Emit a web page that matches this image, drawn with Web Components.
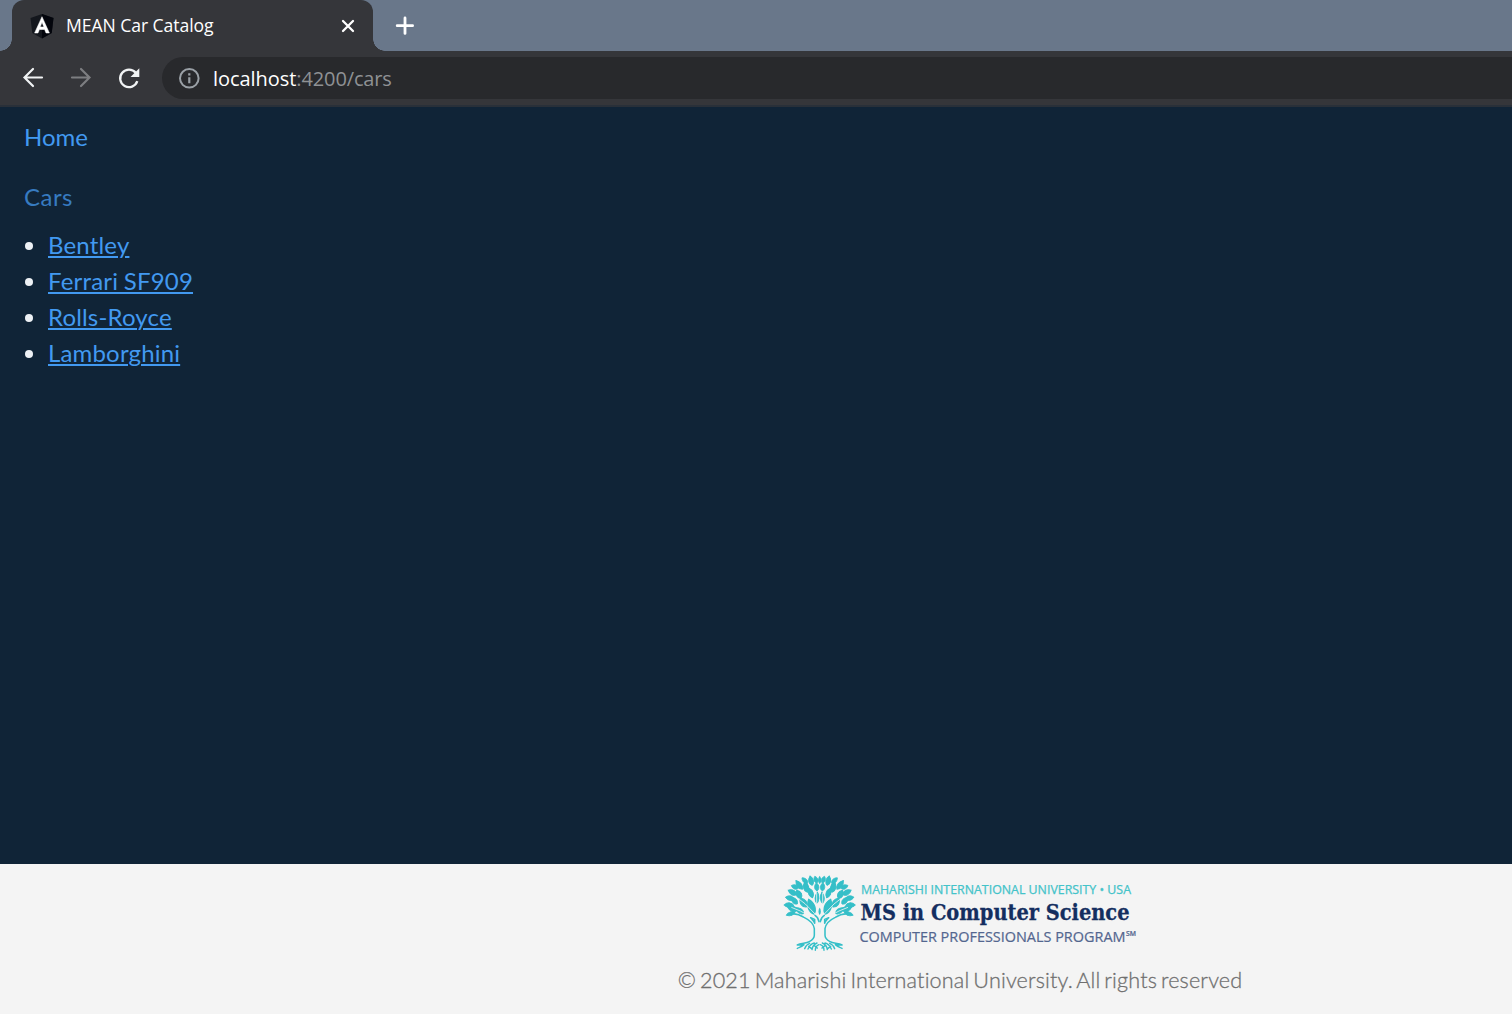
<!DOCTYPE html>
<html lang="en">
<head>
<meta charset="utf-8">
<title>MEAN Car Catalog</title>
<style>
html, body { margin: 0; height: 100%; overflow: hidden; background: #102437; }
body { font: 24px/36px Lato, "Liberation Sans", sans-serif; }
</style>
</head>
<body>
<car-app></car-app>
<script>
const define = (name, html) => {
  const template = document.createElement('template');
  template.innerHTML = html;
  customElements.define(name, class extends HTMLElement {
    constructor() {
      super();
      this.attachShadow({ mode: 'open' }).append(template.content.cloneNode(true));
    }
  });
};

define('browser-tabs', `
<style>
:host { display: flex; height: 51px; background: #69778a; box-sizing: border-box; padding-left: 12px; font: 17.6px/24px "Open Sans", "Noto Sans", sans-serif; }
.tab { position: relative; width: 361px; height: 51px; box-sizing: border-box; padding: 0 17px 0 18px; display: flex; align-items: center; background: #35363a; border-radius: 12px 12px 0 0; color: #fff; }
.tab::before, .tab::after { content: ""; position: absolute; bottom: 0; width: 12px; height: 12px; }
.tab::before { right: 100%; background: radial-gradient(circle at 0 0, transparent 11.5px, #35363a 12px); }
.tab::after { left: 100%; background: radial-gradient(circle at 100% 0, transparent 11.5px, #35363a 12px); }
.title { margin-left: 12px; flex: 1; white-space: nowrap; letter-spacing: -.07px; padding-bottom: 1px; }
svg { display: block; flex: none; }
.plus { margin: 16px 0 0 22px; }
</style>
<div class="tab">
  <svg width="24" height="26" viewBox="0 0 24 26"><path d="M12 1 23.5 5 21.7 20 12 25.5 2.3 20 .5 5Z" fill="#14171d"/><path d="M12 1 23.5 5 21.7 20 12 25.5Z" fill="#03050c"/><path d="M12 3.7 4.6 20h3.4l1.4-3.5h5.2L16 20h3.4ZM12 9.3l1.8 4.6h-3.6Z" fill="#fff" stroke="#fff" stroke-width=".5" fill-rule="evenodd"/></svg>
  <span class="title"><slot></slot></span>
  <svg width="16" height="16" viewBox="0 0 16 16"><path d="M3 3l10 10m0-10L3 13" stroke="#fff" stroke-width="2.3" stroke-linecap="round"/></svg>
</div>
<svg class="plus" width="20" height="20" viewBox="0 0 20 20"><path d="M10 2v15.4M2.2 9.7h15.4" stroke="#fff" stroke-width="2.8" stroke-linecap="round"/></svg>`);

define('browser-toolbar', `
<style>
:host { display: flex; align-items: center; height: 56px; box-sizing: border-box; padding: 0 0 0 21px; background: #35363a; border-bottom: 2px solid #293039; }
svg { display: block; flex: none; }
.nav { margin-right: 24px; }
.nav:nth-of-type(3) { margin-right: 21px; }
.address { flex: 1; height: 42px; border-radius: 21px 0 0 21px; background: #28292c; display: flex; align-items: center; padding-left: 16px; font: 20px/28px "Open Sans", "Noto Sans", sans-serif; color: #8f9194; }
.url { margin-left: 13px; padding-top: 2px; white-space: nowrap; letter-spacing: -.13px; }
b { font-weight: 400; color: #fff; letter-spacing: -.05px; }
</style>
<svg class="nav" width="24" height="24" viewBox="0 0 24 24" fill="none" stroke="#f1f3f4" stroke-width="2.2" stroke-linecap="round"><path d="M21 11.5H3.5M12 3 3.5 11.5l8.5 8.5"/></svg>
<svg class="nav" width="24" height="24" viewBox="0 0 24 24" fill="none" stroke="#7d7e81" stroke-width="2.2" stroke-linecap="round"><path d="M3 11.5h17.5M12 3l8.5 8.5L12 20"/></svg>
<svg class="nav" width="24" height="24" viewBox="0 -.5 24 24"><path d="M20.3 14.7A8.8 8.8 0 1 1 18.8 6.3" fill="none" stroke="#f1f3f4" stroke-width="2.3"/><path d="M22.3 1.8v8.8h-8.8Z" fill="#f1f3f4"/></svg>
<div class="address">
  <svg width="22" height="22" viewBox="0 0 22 22" fill="none" stroke="#9aa0a6" stroke-width="2"><circle cx="11.3" cy="11.3" r="9.3"/><path d="M11.3 10.2v6M11.3 6.2v2.2" stroke-width="2.2"/></svg>
  <span class="url"><b>localhost</b>:4200/cars</span>
</div>`);

define('car-link', `
<style>
:host { display: list-item; list-style: disc; color: #edf1f5; margin-left: 48px; }
a { color: #4299f0; letter-spacing: .17px; word-spacing: -.6px; text-decoration: underline; text-decoration-thickness: 2px; text-underline-offset: 2px; }
</style>
<a href="#"><slot></slot></a>`);

define('car-catalog', `
<style>
:host { display: block; flex: 1; min-height: 0; background: #102437; padding-top: 12px; }
.home, h1 { display: block; margin-left: 24px; text-decoration: none; }
.home { color: #4299f0; }
h1 { font: inherit; letter-spacing: .5px; color: #377bc0; margin-top: 24px; margin-bottom: 12px; }
</style>
<a class="home" href="#">Home</a>
<h1>Cars</h1>
<slot></slot>`);

define('university-logo', `
<style>
:host { display: block; width: 360px; height: 84px; }
svg { display: block; overflow: visible; }
</style>
<svg width="360" height="84" viewBox="0 0 360 84">
  <defs>
    <path id="leaf" d="M0 0C-9-5-10-16 0-25 10-16 9-5 0 0Z"/>
    <g id="half">
      <g fill="#35bfc8" stroke="#35bfc8" stroke-width="2.6">
        <use href="#leaf" transform="translate(67 166) rotate(-72) scale(1.1 1.2)"/>
        <use href="#leaf" transform="translate(60 172) rotate(-108) scale(.8 1.1)"/>
        <use href="#leaf" transform="translate(56 151) rotate(-88) scale(1 1.15)"/>
        <use href="#leaf" transform="translate(67 147) rotate(-42) scale(1 1.05)"/>
        <use href="#leaf" transform="translate(57 132) rotate(-78) scale(.95 1.05)"/>
        <use href="#leaf" transform="translate(65 119) rotate(-62) scale(1 1.15)"/>
        <use href="#leaf" transform="translate(78 130) rotate(-28) scale(1.1 1.1)"/>
        <use href="#leaf" transform="translate(70 100) rotate(-68) scale(.9 .9)"/>
        <use href="#leaf" transform="translate(82 103) rotate(-36) scale(1 1.3)"/>
        <use href="#leaf" transform="translate(97 112) rotate(-14) scale(1.1 1.3)"/>
        <use href="#leaf" transform="translate(98 85) rotate(-46) scale(.85 .95)"/>
        <use href="#leaf" transform="translate(111 91) rotate(-12) scale(1 1.15)"/>
        <use href="#leaf" transform="translate(126 84) rotate(-18) scale(.85 .85)"/>
        <use href="#leaf" transform="translate(126 108) rotate(-4) scale(.9 1)"/>
        <use href="#leaf" transform="translate(113 128) rotate(-22) scale(1 1.25)"/>
        <use href="#leaf" transform="translate(125 145) rotate(4) scale(.85 1.35)"/>
        <use href="#leaf" transform="translate(117 177) rotate(-20) scale(1.4 1.85)"/>
        <use href="#leaf" transform="translate(94 156) rotate(-34) scale(1.25 1.3)"/>
        <use href="#leaf" transform="translate(86 176) rotate(-54) scale(1 1.2)"/>
      </g>
      <path d="M132 184 125 163V114M125 151 102 124M120 177 91 147 73 133M105 184 76 168 49 157" fill="none" stroke="#f4f4f4" stroke-width="2.4"/>
      <path d="M52 176Q72 177 87 187C104 195 116 205 118 221V241Q118 252 103 260C93 266 77 263 67 270L87 269C78 277 73 277 67 280M107 188 119 193V205C117 198 112 194 107 188ZM120 181Q130 187 132 200" fill="none" stroke="#35bfc8" stroke-width="4.6" stroke-linejoin="round" stroke-linecap="round"/>
      <path d="M89 281Q93 269 104 265M99 282Q106 266 118 264M111 284Q113 269 126 264M121 286Q121 273 132 269M101 274 110 281M118 272 127 279" fill="none" stroke="#35bfc8" stroke-width="4.2" stroke-linecap="round"/>
    </g>
  </defs>
  <g transform="translate(-5 -15) scale(.33333)">
    <use href="#half"/>
    <use href="#half" transform="translate(268) scale(-1 1)"/>
    <g fill="#35bfc8">
      <use href="#leaf" transform="translate(134 87) scale(.65 1)"/>
      <use href="#leaf" transform="translate(134 180) scale(.5 .9)"/>
    </g>
  </g>
  <text x="81" y="24" font-family="Open Sans, sans-serif" font-size="12" font-weight="500" fill="#43c3c9" stroke="#43c3c9" stroke-width=".25" textLength="270" lengthAdjust="spacingAndGlyphs">MAHARISHI INTERNATIONAL UNIVERSITY • USA</text>
  <text x="80.5" y="49.5" font-family="Roboto Slab, DejaVu Serif, serif" font-size="22" font-weight="700" fill="#142e60" stroke="#142e60" stroke-width=".3" textLength="269" lengthAdjust="spacingAndGlyphs">MS in Computer Science</text>
  <text x="79.5" y="72" font-family="Open Sans, sans-serif" font-size="15" fill="#53668f" stroke="#53668f" stroke-width=".2"><tspan textLength="266" lengthAdjust="spacingAndGlyphs">COMPUTER PROFESSIONALS PROGRAM</tspan><tspan x="346" y="66" font-size="6.5" font-weight="600" textLength="10" lengthAdjust="spacingAndGlyphs">SM</tspan></text>
</svg>`);

define('page-footer', `
<style>
:host { display: flex; flex-direction: column; align-items: center; width: 1920px; height: 150px; box-sizing: border-box; padding-top: 6px; background: #f4f4f4; }
p { margin: 10px 0 0; font-size: 21.6px; line-height: 32px; font-weight: 300; letter-spacing: .15px; word-spacing: -2px; font-variant-ligatures: none; color: #6f6f6f; -webkit-text-stroke: .3px #6f6f6f; white-space: nowrap; }
</style>
<university-logo></university-logo>
<p>© 2021 Maharishi International University. All rights reserved</p>`);

define('car-app', `
<style>
:host { display: flex; flex-direction: column; height: 1014px; overflow: hidden; }
page-footer { flex: none; }
</style>
<browser-tabs>MEAN Car Catalog</browser-tabs>
<browser-toolbar></browser-toolbar>
<car-catalog>
  <car-link>Bentley</car-link>
  <car-link>Ferrari SF909</car-link>
  <car-link>Rolls-Royce</car-link>
  <car-link>Lamborghini</car-link>
</car-catalog>
<page-footer></page-footer>`);
</script>
</body>
</html>
